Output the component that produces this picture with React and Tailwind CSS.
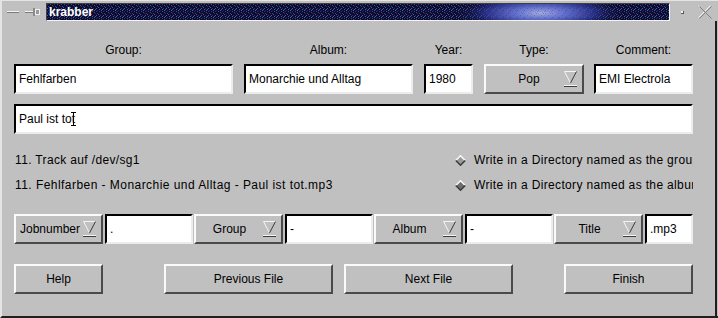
import React from 'react';

function Sunken({ w, children, className = '' }) {
  return (
    <div
      className={`h-[30px] bg-white border-2 border-t-[#000] border-l-[#000] border-b-[#ececec] border-r-[#ececec] flex items-center pl-[3px] overflow-hidden whitespace-nowrap ${w} ${className}`}
    >
      {children}
    </div>
  );
}

function Raised({ w, children, className = '' }) {
  return (
    <div
      className={`h-[30px] border-2 border-t-[#fafafa] border-l-[#fafafa] border-b-[#4a4a4a] border-r-[#4a4a4a] flex items-center ${w} ${className}`}
    >
      {children}
    </div>
  );
}

function MenuArrow() {
  return (
    <svg width="13" height="18" viewBox="0 0 13 18" className="shrink-0">
      <path d="M0.5 1.5 H12.5" stroke="#f4f4f4" />
      <path d="M0.5 1.5 L6.5 13" stroke="#f4f4f4" />
      <path d="M12.5 1.5 L6.5 13" stroke="#3c3c3c" />
      <rect x="0" y="15" width="13" height="1" fill="#f4f4f4" />
      <rect x="0" y="16" width="13" height="1" fill="#3c3c3c" />
    </svg>
  );
}

function OptionMenu({ w, label, left }) {
  return (
    <Raised w={w} className="pr-[5px]">
      <span className={`flex-1 ${left ? 'pl-[2px]' : 'text-center'}`}>{label}</span>
      <MenuArrow />
    </Raised>
  );
}

function Diamond({ fill }) {
  return (
    <svg width="11" height="11" viewBox="0 0 11 11" className="shrink-0">
      <polygon points="5.5,0.5 10.5,5.5 5.5,10.5 0.5,5.5" fill={fill} />
      <path d="M0.8 5.5 L5.5 0.8 L10.2 5.5" stroke="#fafafa" fill="none" strokeWidth="1.5" />
      <path d="M0.8 5.5 L5.5 10.2 L10.2 5.5" stroke="#3a3a3a" fill="none" strokeWidth="1.5" />
    </svg>
  );
}

// speckle pixels for the title pixmap tile
const speckles = [
  [0, 0, '#3a2a8a'], [3, 0, '#1a6a5a'], [5, 1, '#6a3a9a'], [1, 2, '#2a4ab0'],
  [6, 2, '#5a1a3a'], [2, 3, '#4a5aa0'], [4, 4, '#1a3a8a'], [0, 4, '#7a4a9a'],
  [6, 5, '#2a7a6a'], [3, 5, '#5a5ac0'], [1, 6, '#3a1a6a'], [5, 6, '#4a6ad0'],
];

// noisy dark-blue title pixmap with a light blue glow
function TitlePixmap() {
  return (
    <svg width="622" height="16" viewBox="0 0 622 16" className="absolute inset-0">
      <defs>
        <radialGradient id="titleGlow">
          <stop offset="0" stopColor="#c0c8ff" />
          <stop offset="0.3" stopColor="#7080e8" />
          <stop offset="0.65" stopColor="#2a3290" />
          <stop offset="1" stopColor="#0b0d30" stopOpacity="0" />
        </radialGradient>
        <pattern id="titleSpeckle" width="7" height="7" patternUnits="userSpaceOnUse">
          {speckles.map(([x, y, c]) => (
            <rect key={`${x}-${y}`} x={x} y={y} width="1" height="1" fill={c} />
          ))}
        </pattern>
      </defs>
      <rect width="622" height="16" fill="#0b0d30" />
      <rect width="622" height="16" fill="url(#titleSpeckle)" opacity="0.9" />
      <ellipse cx="493" cy="9" rx="85" ry="20" fill="url(#titleGlow)" opacity="0.85" />
      <rect width="622" height="16" fill="url(#titleSpeckle)" opacity="0.35" />
    </svg>
  );
}

export default function App() {
  return (
    <div className="w-[718px] h-[318px] bg-[#c0c0c0] border-l-2 border-t border-b-2 border-l-[#e4e4e4] border-t-[#e4e4e4] border-b-[#202020] text-black text-[12px] leading-[14px] font-['Liberation_Sans',Arial,sans-serif] flex flex-col overflow-hidden">
      {/* Title row */}
      <div className="flex items-start h-[20px] pt-[2px]">
        <div className="w-[44px] h-[18px] flex items-center pl-[5px] gap-[6px]">
          <svg width="12" height="4" viewBox="0 0 12 4">
            <rect x="0" y="1" width="12" height="1" fill="#f4f4f4" />
            <rect x="0" y="2" width="12" height="1" fill="#7a7a7a" />
          </svg>
          <svg width="15" height="10" viewBox="0 0 15 10">
            <rect x="0" y="4" width="8" height="1" fill="#f4f4f4" />
            <rect x="0" y="5" width="8" height="1" fill="#7a7a7a" />
            <rect x="8" y="1" width="2" height="8" fill="#8a8a8a" />
            <rect x="10" y="2" width="5" height="6" fill="#f0f0f0" />
            <rect x="11" y="3" width="3" height="4" fill="#9a9a9a" />
          </svg>
        </div>
        <div className="relative w-[624px] h-[18px] border border-t-[#404040] border-l-[#404040] border-b-[#f4f4f4] border-r-[#f4f4f4] bg-[#0b0d30] overflow-hidden">
          <TitlePixmap />
          <span className="absolute left-[2px] top-[1px] text-white font-bold">krabber</span>
        </div>
        <div className="flex-1 h-[18px] flex items-center">
          <div className="ml-[11px] w-[3px] h-[3px] bg-[#f4f4f4] border-r border-b border-[#555]" />
          <svg width="14" height="14" viewBox="0 0 14 14" className="ml-[14px]">
            <path d="M1 1 L13 13 M13 1 L1 13" stroke="#f4f4f4" strokeWidth="1" transform="translate(-0.5 -0.5)" />
            <path d="M1 1 L13 13 M13 1 L1 13" stroke="#808080" strokeWidth="1" transform="translate(0.5 0.5)" />
          </svg>
        </div>
      </div>

      {/* Content */}
      <div className="flex-1 flex flex-col pl-[12px] mr-[1px] border-r-2 border-[#1e1e1e]">
        {/* Labels */}
        <div className="flex mt-[22px] h-[14px]">
          <div className="w-[219px] text-center">Group:</div>
          <div className="w-[169px] ml-[11px] text-center">Album:</div>
          <div className="w-[49px] ml-[11px] text-center">Year:</div>
          <div className="w-[100px] ml-[11px] text-center">Type:</div>
          <div className="w-[99px] ml-[10px] text-center">Comment:</div>
        </div>

        {/* Inputs */}
        <div className="flex mt-[7px]">
          <Sunken w="w-[219px]">Fehlfarben</Sunken>
          <Sunken w="w-[169px]" className="ml-[11px]">Monarchie und Alltag</Sunken>
          <Sunken w="w-[49px]" className="ml-[11px]">1980</Sunken>
          <OptionMenu w="w-[100px] ml-[11px] pl-[8px]" label="Pop" />
          <Sunken w="w-[99px]" className="ml-[10px]">EMI Electrola</Sunken>
        </div>

        <Sunken w="w-[679px]" className="mt-[10px]">
          <span className="relative">
            Paul ist tot
            <svg width="5" height="14" viewBox="0 0 5 14" className="absolute right-[-1px] top-[0px]">
              <path d="M0 0.5 H5 M2.5 0.5 V13.5 M0 13.5 H5" stroke="#000" strokeWidth="1" />
            </svg>
          </span>
        </Sunken>

        {/* Status lines */}
        <div className="flex mt-[19px] h-[14px] w-[679px]">
          <div className="w-[441px] pl-[1px] tracking-[0.35px]">11. Track auf /dev/sg1</div>
          <div className="flex-1 flex items-center gap-[8px] overflow-hidden whitespace-nowrap tracking-[0.35px]">
            <Diamond fill="#9a9a9a" />
            <span>Write in a Directory named as the group</span>
          </div>
        </div>
        <div className="flex mt-[11px] h-[14px] w-[679px]">
          <div className="w-[441px] pl-[1px] whitespace-nowrap tracking-[0.45px]">11. Fehlfarben - Monarchie und Alltag - Paul ist tot.mp3</div>
          <div className="flex-1 flex items-center gap-[8px] overflow-hidden whitespace-nowrap tracking-[0.35px]">
            <Diamond fill="#6e6e6e" />
            <span>Write in a Directory named as the album</span>
          </div>
        </div>

        {/* Filename pattern */}
        <div className="flex mt-[22px]">
          <OptionMenu w="w-[89px] pl-[2px]" label="Jobnumber" left />
          <Sunken w="w-[88px]" className="ml-[2px]">.</Sunken>
          <OptionMenu w="w-[89px] ml-[1px]" label="Group" />
          <Sunken w="w-[88px]" className="ml-[2px]">-</Sunken>
          <OptionMenu w="w-[89px] ml-[1px]" label="Album" />
          <Sunken w="w-[88px]" className="ml-[2px]">-</Sunken>
          <OptionMenu w="w-[89px] ml-[1px]" label="Title" />
          <Sunken w="w-[48px]" className="ml-[2px]">.mp3</Sunken>
        </div>

        {/* Buttons */}
        <div className="flex mt-[20px]">
          <Raised w="w-[89px] justify-center">Help</Raised>
          <Raised w="w-[169px] ml-[61px] justify-center">Previous File</Raised>
          <Raised w="w-[169px] ml-[11px] justify-center">Next File</Raised>
          <Raised w="w-[129px] ml-[51px] justify-center">Finish</Raised>
        </div>
      </div>
    </div>
  );
}
